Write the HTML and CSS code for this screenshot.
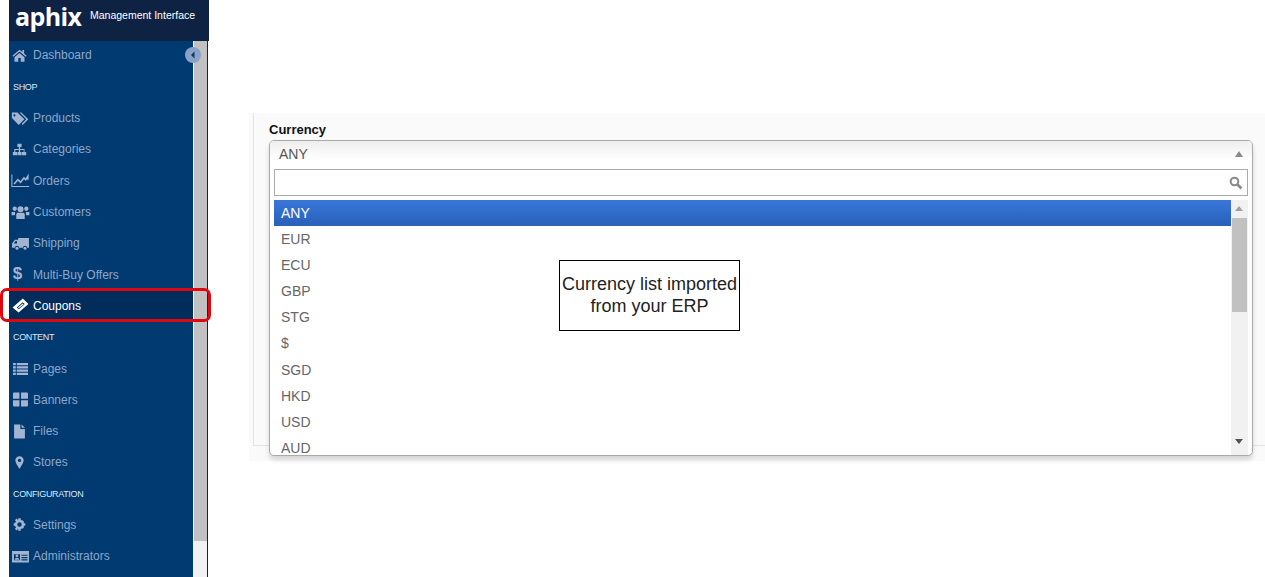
FILE: index.html
```html
<!DOCTYPE html>
<html lang="en">
<head>
  <meta charset="UTF-8" />
  <title>Aphix Management Interface - Coupons</title>
  <link rel="stylesheet" href="styles.css">
</head>
<body>

  <aside class="sidebar">
    <div class="brand">
      <span class="brand-logo">aphix</span>
      <span class="brand-name">Management Interface</span>
    </div>
    <div class="sidebar-body">
      <nav class="nav">
        <a class="nav-item"><svg class="icon" viewBox="0 0 18 16"><path d="M9 1 0.500 8.200l1 1.200L9 3.200l7.500 6.200 1-1.200-3-2.500V1.500h-2v2.300zM3 10v5.500h4.500V11h3v4.500H15V10L9 5z"/></svg>Dashboard</a>
        <div class="nav-title">SHOP</div>
        <a class="nav-item"><svg class="icon icon-wide" viewBox="0 0 22 16"><path fill-rule="evenodd" d="M1 1h6.500l8 8-6.500 6.500-8-8zM4 3a1.300 1.300 0 1 0 .01 0z"/><path d="M10 1h2l8 8-6.500 6.500-1.200-1.200 5.300-5.300z"/></svg>Products</a>
        <a class="nav-item"><svg class="icon" viewBox="0 0 18 16"><path d="M6.500 1h5v4h-1.700v2.300H15V11h2v4h-5v-4h2V8.700H9.800V11H11.500v4h-5v-4h1.700V8.700H4V11h2v4H1v-4h1.700V7.300h5.500V5H6.500z"/></svg>Categories</a>
        <a class="nav-item"><svg class="icon icon-wide" viewBox="0 0 22 16"><path d="M1 1v14h20" fill="none" stroke="currentColor" stroke-width="1.200"/><path d="M3.500 12 8 7l3 3 4-5 2 2 2.500-4v4" fill="none" stroke="currentColor" stroke-width="1.800"/></svg>Orders</a>
        <a class="nav-item"><svg class="icon icon-wide" viewBox="0 0 20 16"><circle cx="10" cy="4.500" r="3.200"/><circle cx="3.800" cy="4" r="2.300"/><circle cx="16.200" cy="4" r="2.300"/><path d="M5.500 9.500C6 8.300 7 8 8 8.200h4c1-.2 2 .1 2.500 1.300V15h-9zM0.500 7.500h3.800L4 11H0.500zM15.700 7.500h3.800V11H16z"/></svg>Customers</a>
        <a class="nav-item"><svg class="icon icon-wide" viewBox="0 0 20 16"><path fill-rule="evenodd" d="M7.500 2H19v10.500h-2a2.200 2.200 0 0 0-4.400 0H8.500a2.200 2.200 0 0 0-4.400 0H1V8l3-4h3.500zM2.800 8h3.400V5.200H4.700z"/><circle cx="6.300" cy="13" r="1.600"/><circle cx="14.800" cy="13" r="1.600"/></svg>Shipping</a>
        <a class="nav-item"><span class="icon icon-dollar">$</span>Multi-Buy Offers</a>
        <a class="nav-item nav-item-active"><svg class="icon icon-wide" viewBox="0 0 18 16"><path fill-rule="evenodd" d="M11.500 0.500 17.500 6.500 7 15.500 0.500 10zM11.300 4.500 5 10l2.200 2 6.300-5.500z"/><path d="M11.300 5.800 12.300 6.700 7.200 11 6.200 10.100z"/></svg>Coupons</a>
        <div class="nav-title">CONTENT</div>
        <a class="nav-item"><svg class="icon icon-wide" viewBox="0 0 18 16"><path d="M1 2h3v2.500H1zM5 2h12v2.500H5zM1 5.500h3V8H1zM5 5.500h12V8H5zM1 9h3v2.500H1zM5 9h12v2.500H5zM1 12.500h3V15H1zM5 12.500h12V15H5z"/></svg>Pages</a>
        <a class="nav-item"><svg class="icon icon-wide" viewBox="0 0 16 14"><path d="M1 1.500a1 1 0 0 1 1-1h5v5.700H1zM8.500 .5H14a1 1 0 0 1 1 1v4.700H8.500zM1 7.700h6v5.800H2a1 1 0 0 1-1-1zM8.500 7.700H15v4.800a1 1 0 0 1-1 1H8.500z"/></svg>Banners</a>
        <a class="nav-item"><svg class="icon" viewBox="0 0 15 18"><path d="M1 0.500h7.500V6H14v11.500H1zM10 0.500 14 4.500h-4z"/></svg>Files</a>
        <a class="nav-item"><svg class="icon" viewBox="0 0 18 16"><path fill-rule="evenodd" d="M9 0.500A5 5 0 0 0 4 5.500C4 8.500 9 15.500 9 15.500s5-7 5-10A5 5 0 0 0 9 0.500zM9 3.500a2 2 0 1 1 0 4 2 2 0 0 1 0-4z"/></svg>Stores</a>
        <div class="nav-title">CONFIGURATION</div>
        <a class="nav-item"><svg class="icon" viewBox="0 0 18 16"><circle cx="9" cy="8" r="4.200" fill="none" stroke="currentColor" stroke-width="3"/><path d="M7.500 .5h3v3h-3zM7.500 12.500h3v3h-3zM2 6.500h2.500v3H2zM13.500 6.500H16v3h-2.500zM3.500 2.800l2-2 2 2-2 2zM10.500 11.200l2-2 2 2-2 2zM3.500 13.200l2-2 2 2-2 2zM10.500 4.800l2-2 2 2-2 2z"/></svg>Settings</a>
        <a class="nav-item"><svg class="icon icon-wide" viewBox="0 0 20 16"><path fill-rule="evenodd" d="M1 2h18v12.500H1zM3 5.500v6.500h6.500V5.500zM11 6v1.300h6.500V6zM11 8.500v1.300h6.500V8.500zM11 11v1.200h6.500V11z"/><circle cx="6.200" cy="7.300" r="1.500"/><path d="M3.700 11.500c0-3 5-3 5 0z"/></svg>Administrators</a>
      </nav>
      <div class="sidebar-scroll"><div class="sidebar-thumb"></div></div>
      <button class="collapse-btn" type="button"><svg viewBox="0 0 8 10"><path d="M5.500 1.500 2 5l3.500 3.500z"/></svg></button>
    </div>
    <div class="active-ring"></div>
  </aside>

  <main class="main">
    <section class="panel">
      <div class="panel-inner">
        <label class="field-label">Currency</label>
        <div class="select">
          <div class="select-head">
            <span>ANY</span>
            <span class="arrow-up"></span>
          </div>
          <div class="select-search">
            <svg class="search-icon" viewBox="0 0 14 14"><circle cx="5.500" cy="5.500" r="3.800" fill="none" stroke="#8a8a8a" stroke-width="2"/><path d="M8.500 8.500 12.500 12.500" stroke="#8a8a8a" stroke-width="2.600"/></svg>
          </div>
          <div class="select-list">
            <ul class="options">
              <li class="option option-active">ANY</li>
              <li class="option">EUR</li>
              <li class="option">ECU</li>
              <li class="option">GBP</li>
              <li class="option">STG</li>
              <li class="option">$</li>
              <li class="option">SGD</li>
              <li class="option">HKD</li>
              <li class="option">USD</li>
              <li class="option">AUD</li>
            </ul>
            <div class="list-scroll">
              <span class="scroll-up"></span>
              <div class="list-thumb"></div>
              <span class="scroll-down"></span>
            </div>
          </div>
        </div>
      </div>
    </section>
    <div class="callout">Currency list imported<br>from your ERP</div>
  </main>

</body>
</html>
```

FILE: styles.css
```css
* {
  box-sizing: border-box;
}
html, body {
  height: 100%;
}
body {
  margin: 0;
  display: flex;
  height: 577px;
  overflow: hidden;
  background: #fff;
  font-family: "Liberation Sans", Arial, sans-serif;
}

/* sidebar */
.sidebar {
  position: relative;
  width: 208px;
  flex: none;
  padding-left: 9px;
  border-right: 1px solid #222;
  height: 577px;
}
.brand {
  display: flex;
  align-items: center;
  width: 200px;
  height: 41px;
  background: #0e2344;
  color: #fff;
  position: relative;
  z-index: 1;
}
.brand-logo {
  width: 81px;
  flex: none;
  padding-left: 6px;
  font-family: "Open Sans", sans-serif;
  font-size: 25px;
  font-weight: 700;
  line-height: 30px;
  letter-spacing: -0.6px;
  margin-top: -9px;
}
.brand-name {
  font-size: 10.5px;
  margin-top: -11px;
  white-space: nowrap;
}
.sidebar-body {
  position: relative;
  display: flex;
  height: 536px;
}
.nav {
  width: 184px;
  height: 536px;
  overflow: hidden;
  background: #003a70;
}
.nav-item, .nav-title {
  display: flex;
  align-items: center;
  height: 31.3px;
}
.nav-item:first-child {
  height: 28px;
  margin-bottom: 2.2px;
}
.nav-item {
  color: #8fa7c8;
  font-size: 12px;
  padding-left: 3px;
}
.nav-title {
  color: #dfe8f2;
  font-size: 9px;
  letter-spacing: -0.35px;
  padding-left: 4px;
}
.nav-item-active {
  background: #002d5c;
  color: #fff;
}
.icon {
  width: 15px;
  height: 15px;
  margin-right: 6px;
  flex: none;
  fill: currentColor;
  color: #a3b4d0;
}
.icon-wide {
  width: 19px;
  margin-left: -1px;
  margin-right: 3px;
}
.nav-item-active .icon {
  color: #fff;
}
.icon-dollar {
  font-size: 17px;
  font-weight: 700;
  line-height: 14px;
  text-align: center;
  padding-right: 4px;
}
.sidebar-scroll {
  width: 14px;
  height: 536px;
  background: #f1f1f1;
  padding-left: 1px;
}
.sidebar-thumb {
  width: 13px;
  height: 500px;
  background: #c1c1c1;
}
.collapse-btn {
  position: absolute;
  left: 176px;
  top: 6px;
  width: 16px;
  height: 16px;
  padding: 3px 4px;
  border: 0;
  border-radius: 50%;
  background: #8ba2c8;
}
.collapse-btn svg {
  display: block;
  width: 8px;
  height: 10px;
  fill: #0e3566;
}
.active-ring {
  position: absolute;
  left: 0;
  top: 288px;
  width: 211px;
  height: 34px;
  border: 3px solid #e0080f;
  border-radius: 7px;
  z-index: 2;
}

/* main area */
.main {
  position: relative;
  flex: 1;
  min-width: 0;
  padding: 113px 0 0 41px;
}
.panel {
  height: 348px;
  background: #fafafa;
  padding-left: 4px;
}
.panel-inner {
  height: 333px;
  border-left: 1px solid #e4e4e4;
  border-bottom: 1px solid #e4e4e4;
  padding: 10px 12px 0 15px;
}
.field-label {
  display: block;
  color: #111;
  font-size: 13px;
  font-weight: 700;
  line-height: 13px;
  margin-bottom: 4px;
}

/* select dropdown */
.select {
  height: 316px;
  background: #fff;
  border: 1px solid #aaa;
  border-radius: 5px;
  box-shadow: 0 4px 5px rgba(0,0,0,0.15);
  overflow: hidden;
}
.select-head {
  display: flex;
  align-items: center;
  justify-content: space-between;
  height: 26px;
  padding: 0 9px;
  color: #555;
  font-size: 14px;
  background: linear-gradient(#eeeeee, #ffffff 70%);
}
.arrow-up {
  border: 4.5px solid transparent;
  border-top: 0;
  border-bottom: 6px solid #8a8a8a;
}
.select-search {
  display: flex;
  align-items: center;
  justify-content: flex-end;
  height: 27px;
  margin: 2px 4px 4px;
  padding-right: 4px;
  background: #fff;
  border: 1px solid #aaa;
}
.search-icon {
  width: 14px;
  height: 14px;
}
.select-list {
  display: flex;
  height: 255px;
  margin-left: 4px;
  margin-right: 4px;
}
.options {
  flex: 1;
  list-style: none;
  margin: 0;
  padding: 0;
  overflow: hidden;
}
.option {
  height: 26.1px;
  line-height: 26.1px;
  padding-left: 7px;
  color: #666;
  font-size: 14px;
}
.option-active {
  color: #fff;
  background: linear-gradient(#3875d7 10%, #2a62bc 90%);
}
.list-scroll {
  position: relative;
  width: 17px;
  background: #f1f1f1;
}
.scroll-up, .scroll-down {
  position: absolute;
  left: 4px;
  border: 4px solid transparent;
}
.scroll-up {
  top: 6px;
  border-top: 0;
  border-bottom: 5px solid #a0a0a0;
}
.scroll-down {
  bottom: 11px;
  border-bottom: 0;
  border-top: 5px solid #505050;
}
.list-thumb {
  position: absolute;
  top: 18px;
  left: 1px;
  width: 15px;
  height: 94px;
  background: #c1c1c1;
}

/* note laid over the screenshot */
.callout {
  position: absolute;
  left: 351px;
  top: 260px;
  width: 181px;
  height: 71px;
  padding-bottom: 2px;
  display: flex;
  align-items: center;
  justify-content: center;
  background: #fff;
  border: 1px solid #000;
  color: #222;
  font-size: 18px;
  line-height: 22px;
  text-align: center;
}
```
